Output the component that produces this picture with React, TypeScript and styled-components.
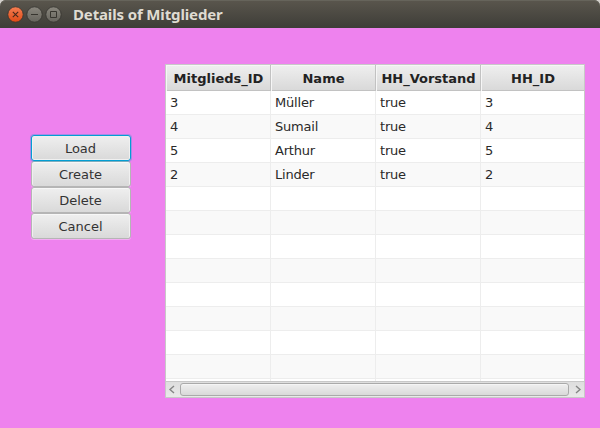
import React from "react";
import styled, { createGlobalStyle } from "styled-components";

const GlobalStyle = createGlobalStyle`
  * { box-sizing: border-box; }
  html, body { margin: 0; padding: 0; }
  body { width: 600px; height: 428px; overflow: hidden; background: #d4d1cc; }
`;

const Window = styled.div`
  display: flex;
  flex-direction: column;
  width: 600px;
  height: 428px;
  font-family: "DejaVu Sans", sans-serif;
  font-size: 13px;
  color: #292929;
`;

const TitleBar = styled.header`
  display: flex;
  align-items: center;
  flex: none;
  height: 28px;
  padding-left: 7px;
  border-radius: 6px 6px 0 0;
  background: linear-gradient(#5a564d, #3e3d38);
  box-shadow: inset 0 1px #66645b;
`;

const Controls = styled.div`
  display: flex;
  gap: 2px;
  svg { display: block; }
`;

const Title = styled.h1`
  margin: 0 0 0 11px;
  font: 700 15px/28px "Noto Sans", sans-serif;
  letter-spacing: -0.14px;
  color: #dfdbd2;
  white-space: nowrap;
`;

const Content = styled.main`
  display: flex;
  flex: 1;
  align-items: flex-start;
  padding-left: 31px;
  background: #ee82ee;
`;

const ButtonColumn = styled.div`
  display: flex;
  flex-direction: column;
  width: 100px;
  margin-top: 107px;
`;

const Button = styled.button<{ $focused?: boolean }>`
  height: 26px;
  padding: 1px 1px 0 0;
  border: 1px solid ${(p) => (p.$focused ? "#039ed3" : "#b5b5b5")};
  border-radius: 3px;
  background: linear-gradient(#efefef, #d9d9d9);
  box-shadow: ${(p) =>
    p.$focused
      ? "inset 0 0 0 1px #f0f0f0, 0 0 0 1px rgba(3, 158, 211, 0.3)"
      : "inset 0 1px #f7f7f7, inset 1px 0 #f0f0f0, inset -1px 0 #f0f0f0, 0 1px rgba(255, 255, 255, 0.35)"};
  position: relative;
  z-index: ${(p) => (p.$focused ? 1 : 0)};
  font: inherit;
  line-height: 23px;
  color: #333;
`;

const Table = styled.section`
  display: flex;
  flex-direction: column;
  width: 420px;
  height: 334px;
  margin: 36px 0 0 34px;
  border: 1px solid #c8c8c8;
  background: #fff;
`;

const HeaderRow = styled.div`
  display: grid;
  flex: none;
  grid-template-columns: 105px 105px 105px 103px;
  height: 26px;
  border-bottom: 1px solid #c2c2c2;
  background: linear-gradient(#efefef, #d9d9d9);
`;

const HeaderCell = styled.div`
  padding: 1px 0 0 1px;
  border-right: 1px solid #c2c2c2;
  box-shadow: inset 1px 1px #f6f6f6;
  font-weight: 700;
  line-height: 26px;
  text-align: center;
  white-space: nowrap;
  color: #222;
  &:last-child { border-right: 0; }
`;

const Body = styled.div`
  flex: 1;
  overflow: hidden;
`;

const Row = styled.div<{ $odd: boolean }>`
  display: grid;
  grid-template-columns: 105px 105px 105px 103px;
  height: 24px;
  border-bottom: 1px solid #ededed;
  background: ${(p) => (p.$odd ? "#f9f9f9" : "#fff")};
`;

const Cell = styled.div`
  padding-left: 4px;
  border-right: 1px solid #ededed;
  line-height: 24px;
  letter-spacing: -0.2px;
  &:last-child { border-right: 0; }
`;

const ScrollBar = styled.div`
  display: flex;
  align-items: center;
  flex: none;
  height: 16px;
  border-top: 1px solid #c8c8c8;
  background: linear-gradient(#dedede, #e9e9e9);
`;

const Arrow = styled.svg`
  flex: none;
  width: 14px;
  height: 15px;
`;

const Thumb = styled.div`
  flex: none;
  width: 389px;
  height: 13px;
  border: 1px solid #aaa;
  border-radius: 3px;
  background: linear-gradient(#efefef, #d9d9d9);
  box-shadow: inset 0 1px #f5f5f5;
`;

const columns = ["Mitglieds_ID", "Name", "HH_Vorstand", "HH_ID"];
const members = [
  ["3", "Müller", "true", "3"],
  ["4", "Sumail", "true", "4"],
  ["5", "Arthur", "true", "5"],
  ["2", "Linder", "true", "2"],
];
const rows = Array.from({ length: 13 }, (_, i) => members[i] ?? ["", "", "", ""]);

function WindowControl({ kind }: { kind: "close" | "minimize" | "maximize" }) {
  const close = kind === "close";
  return (
    <svg width="17" height="17" viewBox="0 0 17 17" fill="none">
      <defs>
        <linearGradient id={kind} x1="0" y1="0" x2="0" y2="1">
          <stop stopColor={close ? "#f57e52" : "#8a877e"} />
          <stop offset="1" stopColor={close ? "#df4a16" : "#66645d"} />
        </linearGradient>
      </defs>
      <circle cx="8.5" cy="8.5" r="7.7" fill={`url(#${kind})`} stroke="#35332e" strokeWidth="0.8" />
      {close && <path d="M5.8 5.8l5.4 5.4M11.2 5.8l-5.4 5.4" stroke="#47281b" strokeWidth="1.1" />}
      {kind === "minimize" && <path d="M5 8.5h7" stroke="#37352f" />}
      {kind === "maximize" && <path d="M5.5 5.5h6v6h-6z" stroke="#37352f" />}
    </svg>
  );
}

export default function App() {
  return (
    <>
      <GlobalStyle />
      <Window>
        <TitleBar>
          <Controls>
            <WindowControl kind="close" />
            <WindowControl kind="minimize" />
            <WindowControl kind="maximize" />
          </Controls>
          <Title>Details of Mitglieder</Title>
        </TitleBar>
        <Content>
          <ButtonColumn>
            <Button $focused>Load</Button>
            <Button>Create</Button>
            <Button>Delete</Button>
            <Button>Cancel</Button>
          </ButtonColumn>
          <Table>
            <HeaderRow>
              {columns.map((name) => (
                <HeaderCell key={name}>{name}</HeaderCell>
              ))}
            </HeaderRow>
            <Body>
              {rows.map((row, i) => (
                <Row key={i} $odd={i % 2 === 1}>
                  {row.map((value, j) => (
                    <Cell key={j}>{value}</Cell>
                  ))}
                </Row>
              ))}
            </Body>
            <ScrollBar>
              <Arrow viewBox="0 0 14 15" fill="none">
                <path d="M8 4L4 7.5L8 11" stroke="#858585" strokeWidth="1.4" />
              </Arrow>
              <Thumb />
              <Arrow viewBox="0 0 14 15" fill="none">
                <path d="M7 4l4 3.5L7 11" stroke="#858585" strokeWidth="1.4" />
              </Arrow>
            </ScrollBar>
          </Table>
        </Content>
      </Window>
    </>
  );
}
